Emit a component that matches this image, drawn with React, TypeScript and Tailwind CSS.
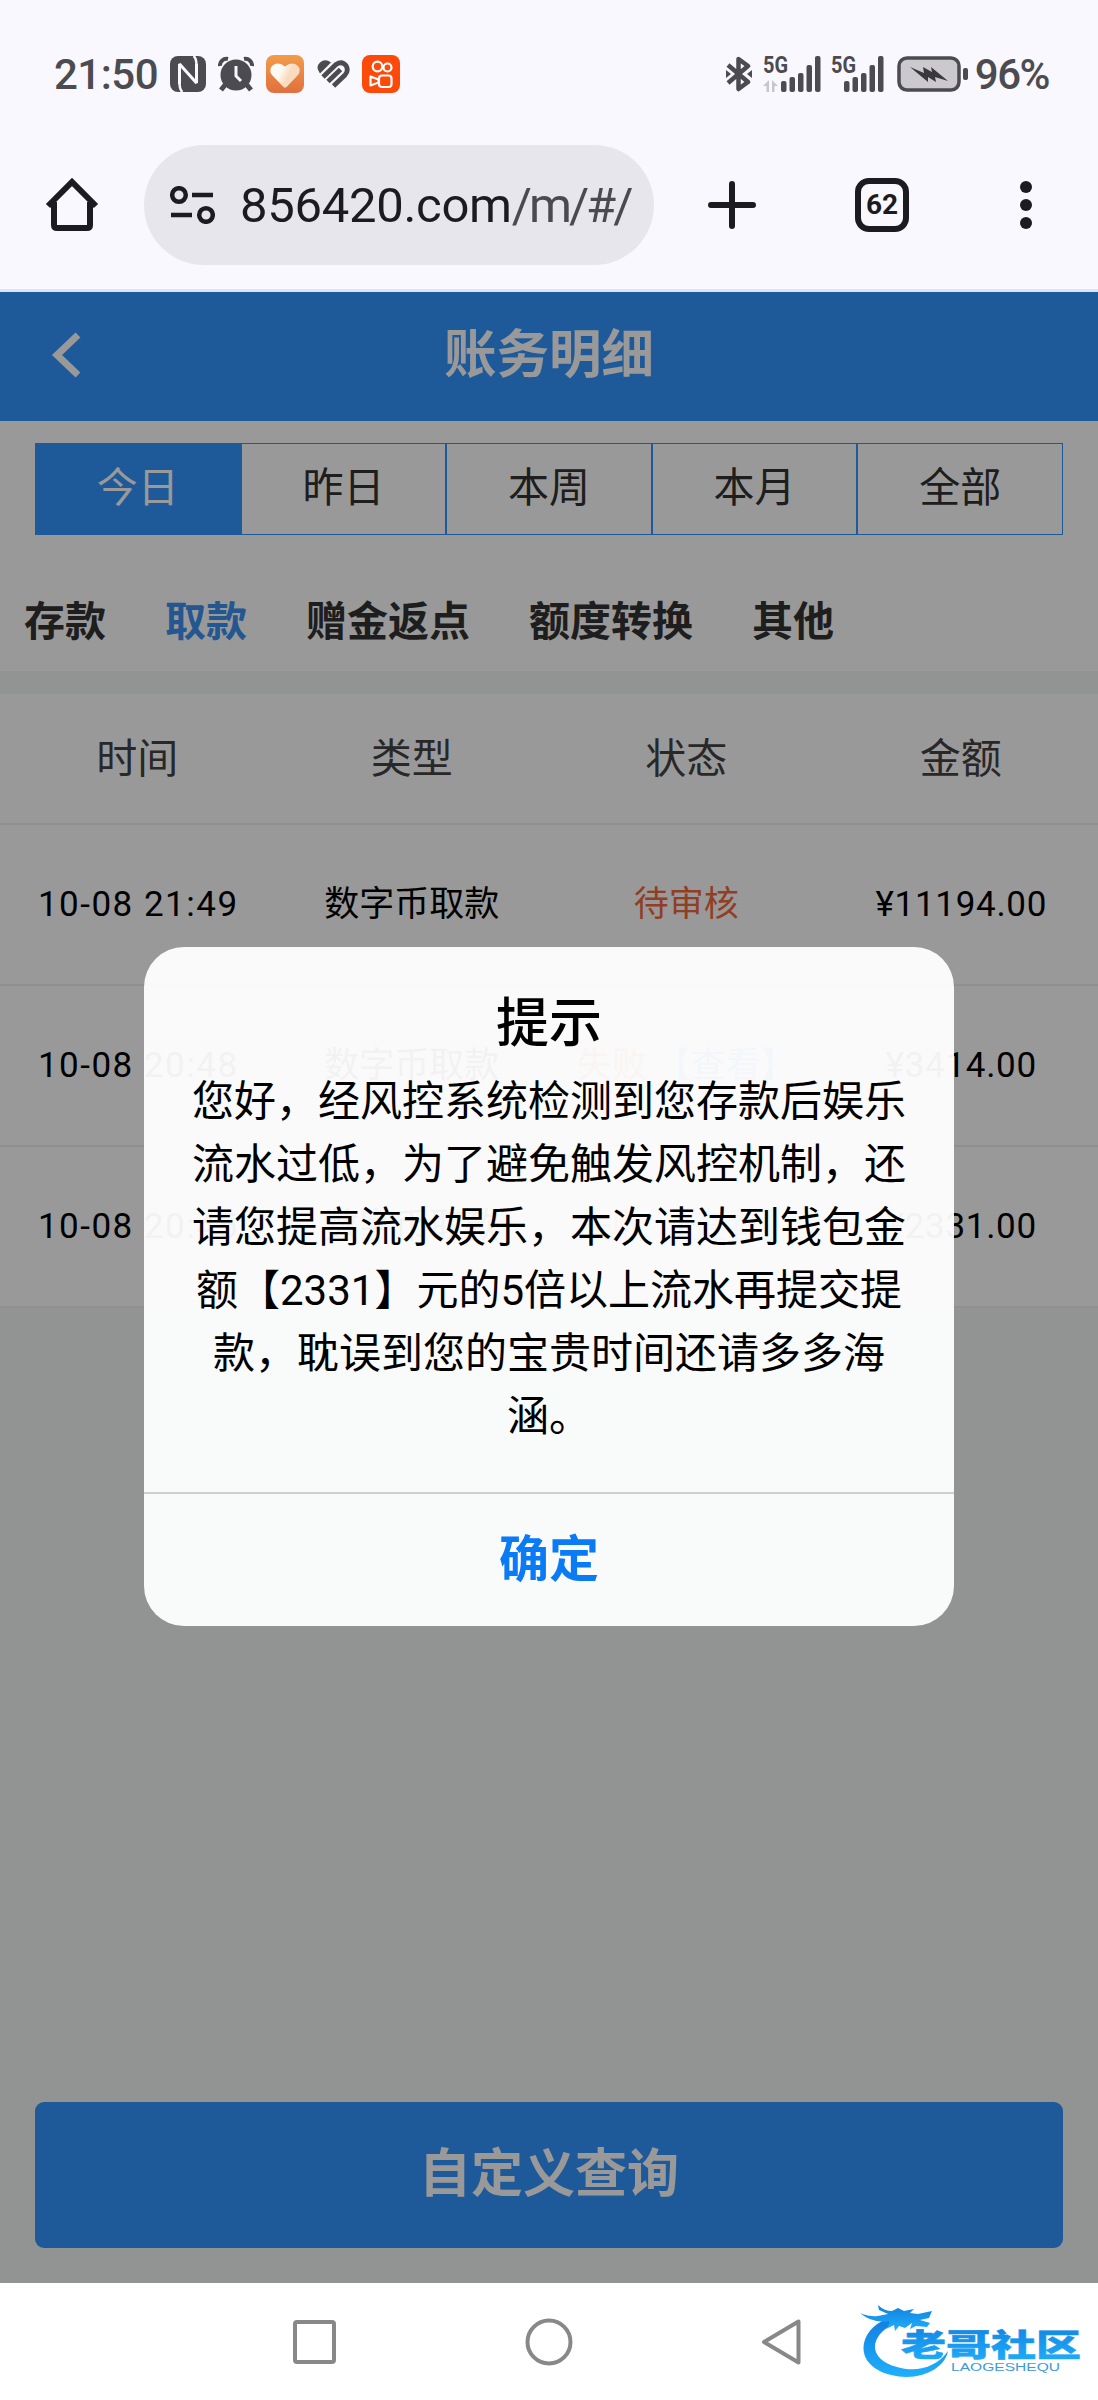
import React from "react";
import clsx from "clsx";

interface RecordRow {
  time: string;
  type: string;
  status: "pending" | "failed";
  amount: string;
}

const ranges = ["今日", "昨日", "本周", "本月", "全部"];
const categories = ["存款", "取款", "赠金返点", "额度转换", "其他"];
const columns = ["时间", "类型", "状态", "金额"];

const records: RecordRow[] = [
  { time: "10-08 21:49", type: "数字币取款", status: "pending", amount: "¥11194.00" },
  { time: "10-08 20:48", type: "数字币取款", status: "failed", amount: "¥3414.00" },
  { time: "10-08 20:45", type: "数字币取款", status: "failed", amount: "¥2331.00" },
];

const messageLines = [
  "您好，经风控系统检测到您存款后娱乐",
  "流水过低，为了避免触发风控机制，还",
  "请您提高流水娱乐，本次请达到钱包金",
  "额【2331】元的5倍以上流水再提交提",
  "款，耽误到您的宝贵时间还请多多海",
  "涵。",
];

const StatusIcons: React.FC = () => (
  <div className="flex items-center gap-[12px]">
    {/* NFC */}
    <svg width="36" height="36" viewBox="0 0 36 36">
      <rect width="36" height="36" rx="8" fill="#4c4b50" />
      <path d="M9.500 28V8L26.500 27V8" fill="none" stroke="#faf8ff" strokeWidth="3" strokeLinejoin="bevel" />
      <path d="M9.500 26q0 8 3 10M26.500 10q0-8-3-10" fill="none" stroke="#faf8ff" strokeWidth="2.500" />
    </svg>
    {/* alarm clock */}
    <svg width="36" height="36" viewBox="0 0 36 36">
      <path d="M2 10a6.500 6.500 0 0 1 8-7M34 10a6.500 6.500 0 0 0-8-7" fill="none" stroke="#4c4b50" strokeWidth="4" />
      <path d="M7 29l-4 5M29 29l4 5" stroke="#4c4b50" strokeWidth="5" />
      <circle cx="18" cy="19" r="15.500" fill="#4c4b50" />
      <path d="M18 10v10l5 5" fill="none" stroke="#faf8ff" strokeWidth="3" />
    </svg>
    {/* fitness app */}
    <svg width="38" height="38" viewBox="0 0 38 38">
      <defs>
        <linearGradient id="fit" x1="0" y1="0" x2="0" y2="1">
          <stop offset="0" stopColor="#f29c4a" />
          <stop offset="1" stopColor="#e0703e" />
        </linearGradient>
        <linearGradient id="fitHeart" x1="0" y1="0" x2="1" y2="0.400">
          <stop offset="0.400" stopColor="#fffaf3" />
          <stop offset="0.700" stopColor="#f9dcc0" />
        </linearGradient>
      </defs>
      <rect width="38" height="38" rx="8" fill="url(#fit)" />
      <path d="M17.500 32q1.500 1 3 0L32 20q3.500-5 0-9-6-5-13 .5Q12 6 6 11q-3.500 4 0 9z" fill="url(#fitHeart)" />
    </svg>
    {/* health heart */}
    <svg width="33" height="28" viewBox="0 0 33 28" className="ml-px">
      <path d="M3 13.500Q-2 7 3 2.500q5-4.500 11 0z" fill="#4c4b50" />
      <g fill="none" stroke="#4c4b50" strokeWidth="4.800">
        <path d="M6 17L19 4.500q6-4 10 1 3 5-1 9.500L16.500 26" />
        <path d="M11 21.500L23.500 9.500" />
      </g>
    </svg>
    {/* short video app */}
    <svg width="38" height="38" viewBox="0 0 38 38">
      <rect width="38" height="38" rx="8" fill="#fb4a0a" />
      <g fill="none" stroke="#fff" strokeWidth="2.200">
        <circle cx="15.500" cy="11.500" r="4.800" />
        <circle cx="25.500" cy="12.500" r="4" />
        <rect x="17" y="20.500" width="12.500" height="11.500" rx="3" />
        <path d="M8.500 21.500v9l8-3v-3z" strokeLinejoin="round" />
      </g>
    </svg>
  </div>
);

const Signal: React.FC<{ activity?: boolean }> = ({ activity }) => (
  <svg width="58" height="46" viewBox="0 -4 58 46">
    <text x="0" y="17.500" fontFamily="Roboto, sans-serif" fontSize="23" fontWeight="700" fill="#4c4b50" textLength="25" lengthAdjust="spacingAndGlyphs">
      5G
    </text>
    {activity && <path d="M0 31l6-6v12h-2.500v-6zM15 31l-6-6v12h2.500v-6z" fill="#c8c6cc" />}
    <g fill="#4c4b50">
      <rect x={activity ? 18 : 13} y="26" width="5.500" height="11" rx="2" />
      <rect x={activity ? 26.500 : 21.500} y="22" width="5.500" height="15" rx="2" />
      <rect x={activity ? 35 : 30} y="18" width="5.500" height="19" rx="2" />
      <rect x={activity ? 43.500 : 38.500} y="10" width="5.500" height="27" rx="2" />
      <rect x={activity ? 52 : 47} y="1" width="5.500" height="36" rx="2" />
    </g>
  </svg>
);

const StatusBar: React.FC = () => (
  <div className="flex h-[145px] justify-between pr-[49px] pl-[54px] text-[#4c4b50]">
    <div className="mt-[48px] flex h-[52px] items-center">
      <span className="w-[116px] text-[42px] font-medium tracking-[-0.5px] whitespace-nowrap">21:50</span>
      <StatusIcons />
    </div>
    <div className="mt-[48px] flex h-[52px] items-center">
      <svg width="28" height="36" viewBox="0 0 28 36" className="mr-[10px]">
        <path d="M3 9l20 17-9.500 7V3L23 10 3 27" fill="none" stroke="#4c4b50" strokeWidth="4.500" strokeLinejoin="round" />
        <path d="M1 14l5 4-5 4zM27 14l-5 4 5 4z" fill="#4c4b50" />
      </svg>
      <Signal activity />
      <span className="w-[10px]" />
      <Signal />
      <svg width="72" height="36" viewBox="0 0 72 36" className="ml-[8px]">
        <rect x="2" y="2" width="60" height="32" rx="8" fill="#cbc8ce" stroke="#4c4b50" strokeWidth="3.500" />
        <rect x="66" y="12" width="5" height="12" rx="2" fill="#4c4b50" />
        <path d="M13 11l14 6-1-6 9 5-1-5 17 14-13-4 1 5-8-5 0 5z" fill="#39383c" />
      </svg>
      <span className="ml-[6px] text-[42px] font-medium tracking-[-1.5px]">96%</span>
    </div>
  </div>
);

const Toolbar: React.FC = () => (
  <div className="flex h-[147px] items-start border-b-[3px] border-[#dfe3f5] text-[#1b1b20]">
    <svg width="54" height="56" viewBox="0 0 54 56" className="mt-[32px] ml-[45px]">
      <path d="M3 29L27 5l24 24M9 25v23q0 3 3 3h30q3 0 3-3V25" fill="none" stroke="#1b1b20" strokeWidth="6" strokeLinejoin="miter" />
    </svg>
    <div className="ml-[45px] flex h-[120px] w-[510px] items-center rounded-full bg-[#e7e6ec] pl-[26px]">
      <svg width="45" height="38" viewBox="0 0 45 38">
        <g fill="none" stroke="#1b1b20" strokeWidth="4.500">
          <circle cx="9" cy="9" r="6.800" />
          <circle cx="36" cy="29" r="6.800" />
          <path d="M22 9h21M1 29h21" />
        </g>
      </svg>
      <span className="ml-[25px] pt-[2px] text-[49px] whitespace-nowrap">
        <span className="tracking-[-0.3px]">856420.com</span>
        <span className="tracking-[-3px] text-[#4a4a50]">/m/#/</span>
      </span>
    </div>
    <svg width="48" height="48" viewBox="0 0 48 48" className="mt-[36px] ml-[54px]">
      <path d="M24 3v42M3 24h42" stroke="#1b1b20" strokeWidth="6" strokeLinecap="round" />
    </svg>
    <div className="mt-[33px] ml-[99px] flex h-[54px] w-[54px] items-center justify-center rounded-[14px] border-[6px] border-[#1b1b20] text-[28px] font-bold">
      62
    </div>
    <div className="mt-[36px] ml-[111px] flex flex-col gap-[6px]">
      <span className="h-3 w-3 rounded-full bg-[#1b1b20]" />
      <span className="h-3 w-3 rounded-full bg-[#1b1b20]" />
      <span className="h-3 w-3 rounded-full bg-[#1b1b20]" />
    </div>
  </div>
);

const RecordsPage: React.FC = () => (
  <div className="flex h-full flex-col bg-[#f4f7f5]">
    <header className="flex h-[129px] items-center justify-center bg-[#3394ff] text-white">
      <svg width="30" height="46" viewBox="0 0 30 46" className="mr-auto mb-[4px] ml-[51px]">
        <path d="M27 3L6 23l21 20" fill="none" stroke="#fff" strokeWidth="7" />
      </svg>
      <h1 className="mr-auto -ml-[81px] pb-[3px] text-[52.5px] font-bold">账务明细</h1>
    </header>

    <div className="h-[250px] bg-white">
      <div className="mx-[35px] flex pt-[22px]">
        {ranges.map((label, i) => (
          <div
            key={label}
            className={clsx(
              "flex h-[92px] flex-1 items-center justify-center border border-[#3394ff] pb-px text-[41px]",
              i === 0 ? "bg-[#3394ff] text-white" : "text-[#333]",
            )}
          >
            {label}
          </div>
        ))}
      </div>
      <div className="flex gap-[59px] pt-[57px] pl-[24px] text-[41px] leading-[60px] font-bold">
        {categories.map((label, i) => (
          <span key={label} className={i === 1 ? "text-[#3c8ff0]" : "text-[#333]"}>
            {label}
          </span>
        ))}
      </div>
    </div>

    <div className="mt-[23px] bg-white">
      <div className="grid h-[131px] grid-cols-4 items-center border-b-2 border-[#eff0ef] pt-[2px] text-center text-[41px] text-[#444]">
        {columns.map((label) => (
          <span key={label}>{label}</span>
        ))}
      </div>
      {records.map((row) => (
        <div
          key={row.time}
          className="grid h-[161px] grid-cols-4 items-center border-b-2 border-[#eff0ef] pt-[2px] text-center text-[35px] whitespace-nowrap text-black"
        >
          <span className="pl-[2px] tracking-[1.5px]">{row.time}</span>
          <span>{row.type}</span>
          {row.status === "pending" ? (
            <span className="text-[#f2683c]">待审核</span>
          ) : (
            <span className="text-[#ff4433]">
              失败 <span className="text-[#3394ff]">【查看】</span>
            </span>
          )}
          <span className="pl-px tracking-[0.7px]">{row.amount}</span>
        </div>
      ))}
    </div>

    <div className="mx-[35px] mt-auto mb-[35px] flex h-[146px] items-center justify-center rounded-[9px] bg-[#3394ff] text-[52px] font-bold text-white">
      自定义查询
    </div>
  </div>
);

const Dialog: React.FC = () => (
  <div className="absolute inset-0 bg-black/40">
    <div className="mx-auto mt-[655px] flex h-[679px] w-[810px] flex-col rounded-[40px] bg-white/95 text-center text-black">
      <h2 className="pt-[37px] text-[53px] leading-[80px] font-medium">提示</h2>
      <div className="mt-[6px] text-[42px] leading-[63px] whitespace-nowrap">
        {messageLines.map((line) => (
          <p key={line}>{line}</p>
        ))}
      </div>
      <button className="mt-auto h-[134px] border-t-2 border-[#cdd0cf] text-[50px] font-bold text-[#0a7bf5]">
        确定
      </button>
    </div>
  </div>
);

const Watermark: React.FC = () => (
  <svg width="238" height="84" viewBox="0 0 238 84">
    <defs>
      <linearGradient id="wm" x1="0" y1="0" x2="0" y2="1">
        <stop offset="0" stopColor="#127fe0" />
        <stop offset="1" stopColor="#1fb0fb" />
      </linearGradient>
    </defs>
    <g fill="url(#wm)">
      <path d="M28 14C0 24-8 60 32 70 60 77 86 64 89 46 78 62 58 68 38 62 10 55 8 32 36 18z" />
      <path d="M1 8q10 4 18 3l10-2-9-4-1-5q6 6 14 6l6-3 6 3 10-2-4 4 8 1 14-3-3 7-9 2 10 3-3 4-11-1-6 3 2-6-7 5-6-2-4 5-1-6-8 4q4-5 3-8-16 3-29-8z" />
    </g>
    <text x="42" y="51" fontSize="31" fontWeight="900" fill="url(#wm)" fontFamily="'Noto Sans CJK SC', sans-serif" textLength="180" lengthAdjust="spacingAndGlyphs" stroke="url(#wm)" strokeWidth="0.500">
      老哥社区
    </text>
    <text x="92" y="66" fontSize="10" fill="#3a9be0" fontFamily="'Liberation Sans', sans-serif" textLength="109" lengthAdjust="spacingAndGlyphs">
      LAOGESHEQU
    </text>
  </svg>
);

const NavBar: React.FC = () => (
  <div className="relative flex h-[117px] items-center bg-white">
    <svg width="44" height="44" viewBox="0 0 44 44" className="ml-[293px]">
      <rect x="2" y="2" width="39" height="40" rx="2" fill="none" stroke="#888" strokeWidth="4" />
    </svg>
    <svg width="48" height="48" viewBox="0 0 48 48" className="ml-[188px]">
      <circle cx="24" cy="24" r="21.500" fill="none" stroke="#888" strokeWidth="4" />
    </svg>
    <svg width="42" height="48" viewBox="0 0 42 48" className="ml-[187px]">
      <path d="M38.500 3.500v41L4 24z" fill="none" stroke="#888" strokeWidth="4" strokeLinejoin="round" />
    </svg>
    <div className="absolute top-[22px] left-[859px]">
      <Watermark />
    </div>
  </div>
);

const App: React.FC = () => {
  return (
    <div className="flex h-[2400px] w-[1098px] flex-col overflow-hidden bg-[#faf8ff] font-[Roboto,'Noto_Sans_CJK_SC',sans-serif]">
      <StatusBar />
      <Toolbar />
      <main className="relative h-[1991px]">
        <RecordsPage />
        <Dialog />
      </main>
      <NavBar />
    </div>
  );
};

export default App;
